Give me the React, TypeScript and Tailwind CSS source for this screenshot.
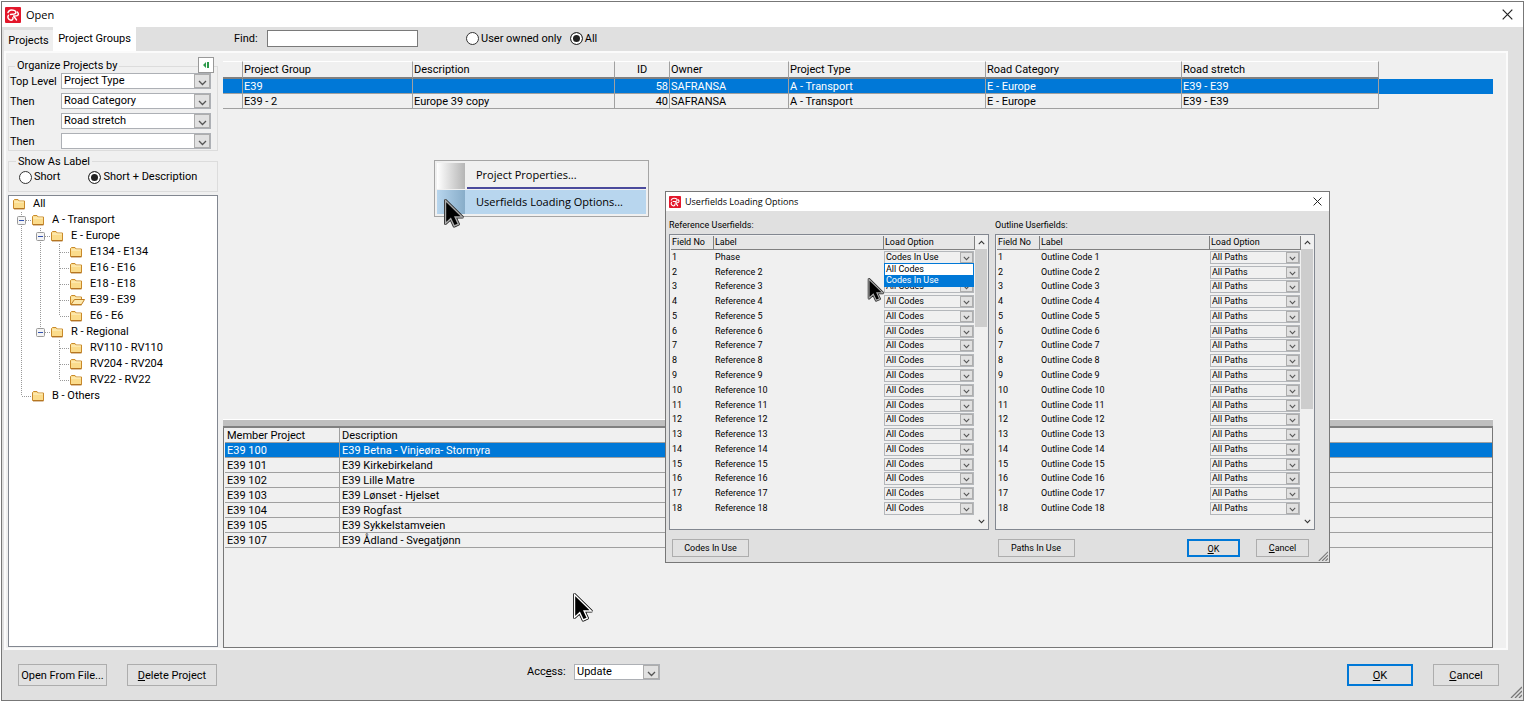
import { ReactNode } from "react";
import { clsx } from "clsx";

type Guide = "line" | "tee" | "end" | "none";

const tree: { label: string; guides: Guide[]; expander?: boolean; open?: boolean }[] = [
  { label: "All", guides: [] },
  { label: "A - Transport", guides: ["tee"], expander: true },
  { label: "E - Europe", guides: ["line", "tee"], expander: true },
  { label: "E134 - E134", guides: ["line", "line", "tee"] },
  { label: "E16 - E16", guides: ["line", "line", "tee"] },
  { label: "E18 - E18", guides: ["line", "line", "tee"] },
  { label: "E39 - E39", guides: ["line", "line", "tee"], open: true },
  { label: "E6 - E6", guides: ["line", "line", "end"] },
  { label: "R - Regional", guides: ["line", "end"], expander: true },
  { label: "RV110 - RV110", guides: ["line", "none", "tee"] },
  { label: "RV204 - RV204", guides: ["line", "none", "tee"] },
  { label: "RV22 - RV22", guides: ["line", "none", "end"] },
  { label: "B - Others", guides: ["end"] },
];

const groups = [
  { name: "E39", description: "", id: 58 },
  { name: "E39 - 2", description: "Europe 39 copy", id: 40 },
];

const members = [
  ["E39 100", "E39 Betna - Vinjeøra- Stormyra"],
  ["E39 101", "E39 Kirkebirkeland"],
  ["E39 102", "E39 Lille Matre"],
  ["E39 103", "E39 Lønset - Hjelset"],
  ["E39 104", "E39 Rogfast"],
  ["E39 105", "E39 Sykkelstamveien"],
  ["E39 107", "E39 Ådland - Svegatjønn"],
];

const levels = [
  { label: "Top Level", value: "Project Type" },
  { label: "Then", value: "Road Category" },
  { label: "Then", value: "Road stretch" },
  { label: "Then", value: "" },
];

const fieldNumbers = Array.from({ length: 18 }, (_, i) => i + 1);

function Logo({ className }: { className: string }) {
  return (
    <svg viewBox="0 0 16 16" className={className} aria-hidden="true">
      <rect width="16" height="16" rx="1" fill="#e3172b" />
      <g fill="none" stroke="#fff" strokeWidth="1.5" strokeLinecap="round" strokeLinejoin="round">
        <path d="M3 5.500C3.800 3.200 6.200 2.400 9 3.400c2.600.9 2.400 3.400.2 3.700L5.500 7.400" />
        <path d="M12.300 5c1.600 1.500 1.400 3.300-.6 3.800L8.600 9l2.900 3.900" />
        <path d="M3.400 8.300c-1.200 1.800-.3 4 1.900 4.700 1.800.5 3-.6 2.600-2.200" />
      </g>
    </svg>
  );
}

function CloseIcon({ className }: { className: string }) {
  return (
    <svg viewBox="0 0 11 11" className={className} aria-hidden="true">
      <path d="M.7.7l9.600 9.600M10.300.7L.7 10.300" fill="none" stroke="#222" strokeWidth="1.200" />
    </svg>
  );
}

function Chevron({ className, up }: { className: string; up?: boolean }) {
  return (
    <svg viewBox="0 0 9 6" className={className} aria-hidden="true">
      <path d={up ? "M1 5l3.500-3.500L8 5" : "M1 1l3.500 3.500L8 1"} fill="none" stroke="currentColor" strokeWidth="1.300" />
    </svg>
  );
}

function Cursor({ className, outlined }: { className: string; outlined?: boolean }) {
  const arrow = "M1.500 1.500v23l5.200-4.800 3.500 7.300 4.200-1.800-3.300-7.200h7.200z";
  return (
    <svg viewBox="0 0 20 29" className={clsx("pointer-events-none absolute z-30", className)} aria-hidden="true">
      <path d={arrow} fill="#000" stroke={outlined ? "#000" : "#222"} strokeWidth="3" strokeLinejoin="round" />
      <path d={arrow} fill="#000" stroke={outlined ? "#fff" : "#aaa"} strokeWidth="1.400" />
    </svg>
  );
}

function Grip({ className }: { className: string }) {
  return (
    <svg viewBox="0 0 12 12" className={className} aria-hidden="true">
      <path d="M1 12L12 1M5 12l7-7M9 12l3-3" fill="none" stroke="#777" strokeWidth="1.300" />
    </svg>
  );
}

function Folder({ open }: { open?: boolean }) {
  return (
    <svg viewBox="0 0 15 12" className="h-3 w-[15px] shrink-0" aria-hidden="true">
      <path d="M.5 10.500V2.500l1-1h3.500l1.200 1.500h5.300v7.500z" fill="#fbdc8c" stroke="#c98a2b" />
      <path d="M1.200 4h9.600" stroke="#fff3c9" />
      <path d="M1 10.900h10.500" stroke="#a8691c" />
      {open && <path d="M1 10.500L4.500 5.500h10l-3 5z" fill="#fde9ae" stroke="#c07f24" />}
    </svg>
  );
}

function GuideCell({ kind, expander }: { kind: Guide; expander?: boolean }) {
  return (
    <svg viewBox="0 0 19 16" className="h-4 w-[19px] shrink-0" aria-hidden="true">
      <g stroke="#999" strokeDasharray="1 1" fill="none">
        {kind !== "none" && <path d={kind === "end" ? "M8.500 0v8" : "M8.500 0v16"} />}
        {(kind === "tee" || kind === "end") && <path d="M9 8.500h9" />}
      </g>
      {expander && (
        <>
          <rect x="4.500" y="4.500" width="8" height="8" rx="1" fill="#f4f4f4" stroke="#999" />
          <path d="M6 8.500h5" stroke="#3050b0" />
        </>
      )}
    </svg>
  );
}

function Combo({ label, value, id, white }: { label?: string; value: string; id?: string; white?: boolean }) {
  return (
    <div className={clsx("relative flex h-4 min-w-0 flex-1 border border-[#adb0b5]", white ? "bg-white" : "bg-[#f0f0f0]")}>
      <select id={id} aria-label={label} defaultValue={value} className="w-full appearance-none pl-[2px] leading-[14px] outline-none">
        <option>{value}</option>
      </select>
      <span className="pointer-events-none absolute inset-y-0 right-0 flex w-4 items-center justify-center border border-[#adadad] bg-[#e1e1e1] pt-1 text-[#555]">
        <Chevron className="h-[6px] w-[9px]" />
      </span>
    </div>
  );
}

function Radio({ name, label, checked }: { name: string; label: string; checked?: boolean }) {
  return (
    <label className="flex items-center gap-[2px] whitespace-nowrap">
      <input
        type="radio"
        name={name}
        defaultChecked={checked}
        className="size-[13px] appearance-none rounded-full border border-[#333] bg-white checked:bg-[#222] checked:shadow-[inset_0_0_0_2px_white]"
      />
      {label}
    </label>
  );
}

function Button({ children, className, primary }: { children: ReactNode; className: string; primary?: boolean }) {
  return (
    <button
      type="button"
      className={clsx(
        "whitespace-nowrap bg-[#e1e1e1] text-center",
        primary ? "border-2 border-[#0078d7]" : "border border-[#adadad]",
        className
      )}
    >
      {children}
    </button>
  );
}

function Sidebar() {
  return (
    <aside className="flex w-[210px] shrink-0 flex-col pt-[6px] pb-[1px]">
      <fieldset className="relative border border-[#dcdcdc] pb-[1px]">
        <legend className="ml-[6px] px-[2px] leading-[14px]">Organize Projects by</legend>
        <button
          type="button"
          aria-label="Collapse panel"
          className="absolute -top-4 right-[3px] flex size-4 items-center justify-center border border-[#999] bg-white"
        >
          <svg viewBox="0 0 7 6" className="h-[6px] w-[7px]" aria-hidden="true">
            <path d="M0 3l3-3v6zM4 0h2v6H4z" fill="#2d9a4a" />
          </svg>
        </button>
        <div className="flex flex-col gap-1 pr-[6px]">
          {levels.map((level, i) => (
            <div key={i} className="flex items-center">
              <label htmlFor={`level-${i}`} className="w-[52px] shrink-0 whitespace-nowrap pt-px pl-[1px] leading-[15px]">
                {level.label}
              </label>
              <Combo id={`level-${i}`} value={level.value} white />
            </div>
          ))}
        </div>
      </fieldset>

      <fieldset className="mt-1 border border-[#dcdcdc] pb-[6px] pl-[10px]">
        <legend className="-ml-[3px] px-[2px] leading-[13px]">Show As Label</legend>
        <div className="flex gap-[28px] pt-px">
          <Radio name="show" label="Short" />
          <Radio name="show" label="Short + Description" checked />
        </div>
      </fieldset>

      <ul className="mt-[3px] flex-1 border border-[#828790] bg-white pl-1 leading-4">
        {tree.map((node) => (
          <li key={node.label} className="flex h-4 items-center">
            {node.guides.map((kind, i) => (
              <GuideCell key={i} kind={kind} expander={node.expander && i === node.guides.length - 1} />
            ))}
            <Folder open={node.open} />
            <span className="pl-[5px]">{node.label}</span>
          </li>
        ))}
      </ul>
    </aside>
  );
}

function GroupTable() {
  const head = "h-[18px] border-r border-r-[#a0a0a0] border-b-2 border-b-[#808080] border-t border-t-white px-[1px] py-0 font-normal";
  const cell = "h-[15px] border-r border-b border-[#a0a0a0] px-[1px] pt-px pb-0";
  return (
    <table className="w-full table-fixed border-separate border-spacing-0 text-left leading-[13px]">
      <colgroup>
        <col className="w-[20px]" />
        <col className="w-[170px]" />
        <col className="w-[202px]" />
        <col className="w-[55px]" />
        <col className="w-[119px]" />
        <col className="w-[197px]" />
        <col className="w-[196px]" />
        <col className="w-[197px]" />
        <col />
      </colgroup>
      <thead>
        <tr>
          <th className={head} />
          <th className={head}>Project Group</th>
          <th className={head}>Description</th>
          <th className={clsx(head, "text-center")}>ID</th>
          <th className={head}>Owner</th>
          <th className={head}>Project Type</th>
          <th className={head}>Road Category</th>
          <th className={head}>Road stretch</th>
          <th />
        </tr>
      </thead>
      <tbody>
        {groups.map((group, i) => (
          <tr key={group.name} className={i === 0 ? "bg-[#0078d7] text-white" : ""}>
            <td className={cell} />
            <td className={cell}>{group.name}</td>
            <td className={cell}>{group.description}</td>
            <td className={clsx(cell, "text-right")}>{group.id}</td>
            <td className={cell}>SAFRANSA</td>
            <td className={cell}>A - Transport</td>
            <td className={cell}>E - Europe</td>
            <td className={cell}>E39 - E39</td>
            <td />
          </tr>
        ))}
      </tbody>
    </table>
  );
}

function MemberTable() {
  const cell = "h-[15px] border-b border-[#a0a0a0] px-[2px] pt-px pb-0";
  return (
    <table className="w-full table-fixed border-separate border-spacing-0 text-left leading-[13px]">
      <colgroup>
        <col className="w-[115px]" />
        <col />
      </colgroup>
      <thead>
        <tr>
          <th className={clsx(cell, "border-r font-normal")}>Member Project</th>
          <th className={clsx(cell, "font-normal")}>Description</th>
        </tr>
      </thead>
      <tbody>
        {members.map(([name, description], i) => (
          <tr key={name} className={i === 0 ? "bg-[#0078d7] text-white" : ""}>
            <td className={clsx(cell, "border-r")}>{name}</td>
            <td className={cell}>{description}</td>
          </tr>
        ))}
      </tbody>
    </table>
  );
}

function ContextMenu() {
  return (
    <div role="menu" className="absolute left-[434px] top-[160px] z-10 flex w-[215px] flex-col border border-[#a5a5a5] bg-[#f0f0f0] p-[2px] font-['Open_Sans',sans-serif] text-[11px]">
      <div className="flex">
        <div className="w-[28px] bg-linear-to-r from-white to-[#b5b5b5]" />
        <div className="flex-1 border-b-2 border-[#4a4a9c] ml-[2px]">
          <button type="button" role="menuitem" className="block h-6 w-full pl-[9px] text-left">
            Project Properties...
          </button>
        </div>
      </div>
      <div className="mt-[1px] flex bg-[#b8d6ee]">
        <div className="w-[28px] bg-linear-to-r from-[#b8d6ee] to-[#88adc9]" />
        <button type="button" role="menuitem" className="h-6 flex-1 pl-[11px] text-left font-medium">
          Userfields Loading Options...
        </button>
      </div>
    </div>
  );
}

function FieldPanel({
  title,
  prefix,
  option,
  first,
  thumb,
}: {
  title: string;
  prefix: string;
  option: string;
  first?: { label: string; option: string };
  thumb: string;
}) {
  const head = "h-[14px] border-r border-b border-[#808080] px-[1px] py-0 text-left font-normal";
  return (
    <section className="min-w-0 flex-1">
      <h3 className="mb-[3px] leading-3">{title}</h3>
      <div className="flex h-[296px] border border-[#828790] bg-[#f0f0f0] p-[1px]">
        <div className="min-w-0 flex-1">
          <table className="h-[280px] w-full table-fixed border-separate border-spacing-0 leading-[11px]">
            <colgroup>
              <col className="w-[43px]" />
              <col />
              <col className="w-[91px]" />
            </colgroup>
            <thead className="bg-[#e6e6e6]">
              <tr>
                <th className={head}>Field No</th>
                <th className={head}>Label</th>
                <th className={head}>Load Option</th>
              </tr>
            </thead>
            <tbody>
              {fieldNumbers.map((n) => {
                const opened = n === 1 && first;
                const label = opened ? first.label : `${prefix} ${n}`;
                return (
                  <tr key={n}>
                    <td className="px-[1px] py-0">{n}</td>
                    <td className="px-[1px] py-0">{label}</td>
                    <td className="relative py-0 pr-[1px]">
                      <div className="relative flex h-[13px] border border-[#b4b7bb] bg-[#f0f0f0]">
                        <select
                          aria-label={`Load option for ${label}`}
                          defaultValue={opened ? first.option : option}
                          className="w-full appearance-none pl-[1px] leading-[11px] outline-none"
                        >
                          <option>{opened ? first.option : option}</option>
                        </select>
                        <span className="pointer-events-none absolute inset-y-0 right-0 flex w-[13px] items-center justify-center border border-[#adadad] bg-[#e1e1e1] pt-[2px] text-[#555]">
                          <Chevron className="h-[5px] w-[7px]" />
                        </span>
                      </div>
                      {opened && (
                        <ul role="listbox" className="absolute left-0 right-[1px] top-[13px] z-10 border border-[#0078d7] bg-white">
                          <li role="option" aria-selected="false" className="pl-[1px]">
                            All Codes
                          </li>
                          <li role="option" aria-selected="true" className="bg-[#0078d7] pl-[1px] text-white">
                            Codes In Use
                          </li>
                        </ul>
                      )}
                    </td>
                  </tr>
                );
              })}
            </tbody>
          </table>
        </div>
        <div className="flex w-3 flex-col items-center py-1 text-[#333]">
          <Chevron up className="h-[5px] w-[7px] shrink-0" />
          <div className={clsx("mt-1 w-full bg-[#cdcdcd]", thumb)} />
          <Chevron className="mt-auto h-[5px] w-[7px] shrink-0" />
        </div>
      </div>
    </section>
  );
}

function LoadingOptionsDialog() {
  return (
    <div role="dialog" aria-label="Userfields Loading Options" className="absolute left-[665px] top-[191px] z-20 w-[665px] border border-[#777] bg-[#e0e0e0] text-[9px]">
      <header className="flex h-[19px] items-center gap-1 bg-white pl-[3px] pr-[7px]">
        <Logo className="size-3" />
        <h2 className="flex-1 font-['Open_Sans',sans-serif]">Userfields Loading Options</h2>
        <button type="button" aria-label="Close">
          <CloseIcon className="size-[9px]" />
        </button>
      </header>
      <div className="flex gap-[6px] pl-[3px] pr-[14px] pt-2">
        <FieldPanel
          title="Reference Userfields:"
          prefix="Reference"
          option="All Codes"
          first={{ label: "Phase", option: "Codes In Use" }}
          thumb="h-[78px]"
        />
        <FieldPanel title="Outline Userfields:" prefix="Outline Code" option="All Paths" thumb="h-[160px]" />
      </div>
      <footer className="flex items-center px-[6px] pt-[9px] pb-[5px]">
        <div className="flex flex-1">
          <Button className="h-[18px] w-[77px]">Codes In Use</Button>
        </div>
        <div className="flex flex-1 items-center">
          <Button className="h-[18px] w-[77px]">Paths In Use</Button>
          <Button className="ml-auto h-[18px] w-[53px]" primary>
            <span className="underline">O</span>K
          </Button>
          <Button className="ml-4 mr-[14px] h-[18px] w-[53px]">
            <span className="underline">C</span>ancel
          </Button>
        </div>
      </footer>
      <Grip className="absolute bottom-[1px] right-[1px] size-[10px]" />
      <Cursor className="left-[201px] top-[86px] h-6 w-[18px]" />
    </div>
  );
}

export default function App() {
  return (
    <div className="relative flex min-h-screen flex-col bg-white p-px font-[Roboto,sans-serif] text-[11px] leading-4 text-black">
      <div className="flex flex-1 flex-col border border-[#777] bg-[#e0e0e0]">
        <header className="flex h-[25px] items-center gap-[5px] bg-white pl-[3px] pr-[10px]">
          <Logo className="size-4" />
          <h1 className="flex-1 font-['Open_Sans',sans-serif]">Open</h1>
          <button type="button" aria-label="Close">
            <CloseIcon className="size-[11px]" />
          </button>
        </header>

        <div className="flex h-6 items-end pl-[2px]">
          <div role="tablist" className="flex items-end">
            <button type="button" role="tab" aria-selected="false" className="h-[21px] w-[49px] bg-[#efefef]">
              Projects
            </button>
            <button type="button" role="tab" aria-selected="true" className="h-6 w-[83px] bg-white">
              Project Groups
            </button>
          </div>
          <div className="ml-[98px] flex h-[23px] items-center self-start">
            <label htmlFor="find" className="w-[33px]">
              Find:
            </label>
            <input id="find" type="text" className="h-[17px] w-[151px] border border-[#7a7a7a] bg-white px-1 outline-none" />
            <div className="ml-[48px] flex gap-[8px]">
              <Radio name="owner" label="User owned only" />
              <Radio name="owner" label="All" checked />
            </div>
          </div>
        </div>

        <main className="mr-[15px] ml-[2px] flex flex-1 gap-[5px] border-2 border-[#fbfbfb] bg-[#f0f0f0] pr-[13px] pl-[2px]">
          <Sidebar />
          <div className="flex min-w-0 flex-1 flex-col pt-[8px]">
            <div className="flex-1">
              <GroupTable />
            </div>
            <div className="h-[9px] border-t border-b-2 border-t-white border-b-[#808080] bg-[#bfbfbf]" />
            <div className="h-[220px] border border-t-0 border-[#777] pl-[1px]">
              <MemberTable />
            </div>
          </div>
        </main>

        <footer className="flex h-[50px] items-start pl-4 pt-[14px]">
          <Button className="h-[22px] w-[89px] pt-px">Open From File...</Button>
          <Button className="ml-5 h-[22px] w-[90px] pt-px">
            <span className="underline">D</span>elete Project
          </Button>
          <div className="ml-[310px] flex w-[133px] items-center">
            <label htmlFor="access" className="w-[47px]">
              Acc<span className="underline">e</span>ss:
            </label>
            <Combo id="access" value="Update" white />
          </div>
          <Button className="ml-auto h-[22px] w-[66px] pt-px" primary>
            <span className="underline">O</span>K
          </Button>
          <Button className="ml-5 mr-[24px] h-[22px] w-[66px] pt-px">
            <span className="underline">C</span>ancel
          </Button>
        </footer>
      </div>

      <Grip className="absolute bottom-[4px] right-[3px] size-3" />
      <ContextMenu />
      <LoadingOptionsDialog />
      <Cursor className="left-[444px] top-[199px] h-[29px] w-5" />
      <Cursor className="left-[573px] top-[593px] h-[29px] w-5" outlined />
    </div>
  );
}
